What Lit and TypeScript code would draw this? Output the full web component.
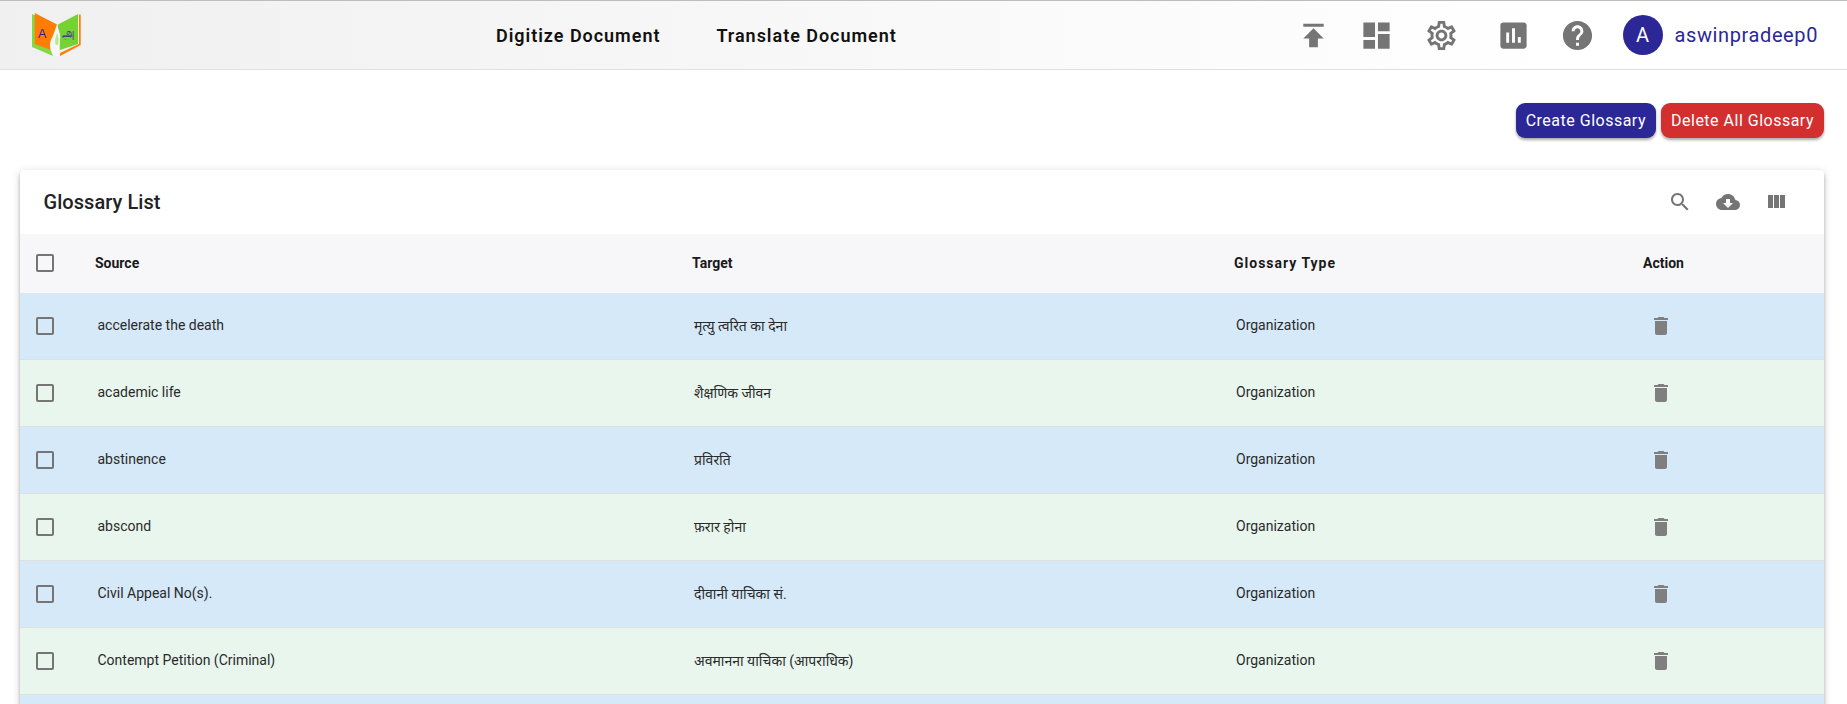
import { LitElement, css, html, svg } from "lit";
import { customElement } from "lit/decorators.js";

const rows = [
  ["accelerate the death", "मृत्यु त्वरित का देना"],
  ["academic life", "शैक्षणिक जीवन"],
  ["abstinence", "प्रविरति"],
  ["abscond", "फ़रार होना"],
  ["Civil Appeal No(s).", "दीवानी याचिका सं."],
  ["Contempt Petition (Criminal)", "अवमानना याचिका (आपराधिक)"],
];

// material icon paths, 24x24 viewbox
const icons: Record<string, string> = {
  publish: "M5 4v2h14V4H5zm0 10h4v6h6v-6h4l-7-7-7 7z",
  dashboard: "M3 13h8V3H3v10zm0 8h8v-6H3v6zm10 0h8V11h-8v10zm0-18v6h8V3h-8z",
  settings:
    "M19.43 12.98c.04-.32.07-.64.07-.98 0-.34-.03-.66-.07-.98l2.11-1.65c.19-.15.24-.42.12-.64l-2-3.46c-.09-.16-.26-.25-.44-.25-.06 0-.12.01-.17.03l-2.49 1c-.52-.4-1.08-.73-1.69-.98l-.38-2.65C14.46 2.18 14.25 2 14 2h-4c-.25 0-.46.18-.49.42l-.38 2.65c-.61.25-1.17.59-1.69.98l-2.49-1c-.06-.02-.12-.03-.18-.03-.17 0-.34.09-.43.25l-2 3.46c-.13.22-.07.49.12.64l2.11 1.65c-.04.32-.07.65-.07.98 0 .33.03.66.07.98l-2.11 1.65c-.19.15-.24.42-.12.64l2 3.46c.09.16.26.25.44.25.06 0 .12-.01.17-.03l2.49-1c.52.4 1.08.73 1.69.98l.38 2.65c.03.24.24.42.49.42h4c.25 0 .46-.18.49-.42l.38-2.65c.61-.25 1.17-.59 1.69-.98l2.49 1c.06.02.12.03.18.03.17 0 .34-.09.43-.25l2-3.46c.12-.22.07-.49-.12-.64l-2.11-1.65zm-1.98-1.71c.04.31.05.52.05.73 0 .21-.02.43-.05.73l-.14 1.13.89.7 1.08.84-.7 1.21-1.27-.51-1.04-.42-.9.68c-.43.32-.84.56-1.25.73l-1.06.43-.16 1.13-.2 1.35h-1.4l-.19-1.35-.16-1.13-1.06-.43c-.43-.18-.83-.41-1.23-.71l-.91-.7-1.06.43-1.27.51-.7-1.21 1.08-.84.89-.7-.14-1.13c-.03-.31-.05-.54-.05-.74s.02-.43.05-.73l.14-1.13-.89-.7-1.08-.84.7-1.21 1.27.51 1.04.42.9-.68c.43-.32.84-.56 1.25-.73l1.06-.43.16-1.13.2-1.35h1.39l.19 1.35.16 1.13 1.06.43c.43.18.83.41 1.23.71l.91.7 1.06-.43 1.27-.51.7 1.21-1.07.85-.89.7.14 1.13zM12 8c-2.21 0-4 1.79-4 4s1.79 4 4 4 4-1.79 4-4-1.79-4-4-4zm0 6c-1.1 0-2-.9-2-2s.9-2 2-2 2 .9 2 2-.9 2-2 2z",
  chart:
    "M19 3H5c-1.1 0-2 .9-2 2v14c0 1.1.9 2 2 2h14c1.1 0 2-.9 2-2V5c0-1.1-.9-2-2-2zM9 17H7v-7h2v7zm4 0h-2V7h2v10zm4 0h-2v-4h2v4z",
  help:
    "M12 2C6.48 2 2 6.48 2 12s4.48 10 10 10 10-4.48 10-10S17.52 2 12 2zm1 17h-2v-2h2v2zm2.07-7.75l-.9.92C13.45 12.9 13 13.5 13 15h-2v-.5c0-1.1.45-2.1 1.17-2.83l1.24-1.26c.37-.36.59-.86.59-1.41 0-1.1-.9-2-2-2s-2 .9-2 2H8c0-2.21 1.79-4 4-4s4 1.79 4 4c0 .88-.36 1.68-.93 2.25z",
  search:
    "M15.5 14h-.79l-.28-.27C15.41 12.59 16 11.11 16 9.5 16 5.91 13.09 3 9.5 3S3 5.91 3 9.5 5.91 16 9.5 16c1.61 0 3.09-.59 4.23-1.57l.27.28v.79l5 4.99L20.49 19l-4.99-5zm-6 0C7.01 14 5 11.99 5 9.5S7.01 5 9.5 5 14 7.01 14 9.5 11.99 14 9.5 14z",
  download:
    "M19.35 10.04C18.67 6.59 15.64 4 12 4 9.11 4 6.6 5.64 5.35 8.04 2.34 8.36 0 10.91 0 14c0 3.31 2.69 6 6 6h13c2.76 0 5-2.24 5-5 0-2.64-2.05-4.78-4.65-4.96zM17 13l-5 5-5-5h3V9h4v4h3z",
  columns: "M10 18h5V5h-5v13zm-6 0h5V5H4v13zM16 5v13h5V5h-5z",
  trash: "M6 19c0 1.1.9 2 2 2h8c1.1 0 2-.9 2-2V7H6v12zM19 4h-3.5l-1-1h-5l-1 1H5v2h14V4z",
  box: "M19 5v14H5V5h14m0-2H5c-1.1 0-2 .9-2 2v14c0 1.1.9 2 2 2h14c1.1 0 2-.9 2-2V5c0-1.1-.9-2-2-2z",
};

const icon = (name: string, cls = "") => html`
  <svg class="icon ${cls}" viewBox="0 0 24 24"><path d=${icons[name]}></path></svg>
`;

const logo = svg`
  <polygon points="0,1 21,12 21,43 0,34" fill="#84d843"></polygon>
  <polygon points="2.7,0 25,11.5 18,31 19,37 2.7,31" fill="#ff7d05"></polygon>
  <polygon points="48.7,1.5 48.7,32 28,43 28,40 47,31 47,1.5" fill="#ff7d05"></polygon>
  <polygon points="26,11.5 46,1 46,31 28,37 24,21" fill="#74d233"></polygon>
  <path d="M21 43 C18 36 17 32 19 27 C21 22 24 19 25 12 C27 18 29 22 28 28 C28 33 27 37 27 43 Z" fill="#f6f6f6"></path>
  <path d="M24 32 C22 28 24 24 25 20 C27 24 27 28 26 32 Z" fill="#b6ec90"></path>
  <text x="6" y="24.5" class="logo-a">A</text>
  <text x="29.5" y="26" class="logo-t" textLength="12.5" lengthAdjust="spacingAndGlyphs">அ</text>
`;

@customElement("app-root")
export class AppRoot extends LitElement {
  static styles = css`
    :host {
      display: block;
      height: 704px;
      overflow: hidden;
      background: #fff;
      font-family: Roboto, "Noto Sans", sans-serif;
      color: #222;
    }
    .icon {
      display: block;
      fill: #757575;
    }
    header {
      height: 68px;
      display: flex;
      align-items: center;
      border-top: 1px solid #bdbdbd;
      border-bottom: 1px solid #e0e0e0;
      background: linear-gradient(90deg, #f0f0f0, #ffffff 85%);
    }
    .logo {
      width: 49px;
      height: 43px;
      margin-left: 32px;
      align-self: flex-start;
      margin-top: 12px;
      flex: none;
    }
    .logo-a {
      font: 12.5px "Liberation Sans", sans-serif;
      fill: #3a1a9a;
    }
    .logo-t {
      font: 17px "Noto Sans", sans-serif;
      fill: #3a1a9a;
    }
    nav {
      display: flex;
      gap: 56px;
      margin-left: 415px;
      font-size: 18px;
      font-weight: 600;
      letter-spacing: 0.97px;
      color: #111;
    }
    .tools {
      margin-left: auto;
      display: flex;
      align-items: center;
      padding-right: 29px;
    }
    .tools .icon {
      width: 35px;
      height: 35px;
    }
    .tools .t1 { margin-right: 28px; }
    .tools .t2 { margin-right: 30px; }
    .tools .t3 { margin-right: 37px; }
    .tools .t4 { margin-right: 29px; }
    .tools .t5 { margin-right: 28px; }
    .avatar {
      width: 40px;
      height: 40px;
      border-radius: 50%;
      background: #2b2797;
      color: #fff;
      font-size: 20px;
      display: flex;
      align-items: center;
      justify-content: center;
      margin-right: 12px;
    }
    .user {
      font-size: 20px;
      color: #2b2797;
      letter-spacing: 0.6px;
    }
    .actions {
      display: flex;
      justify-content: flex-end;
      gap: 5px;
      padding: 33px 23px 0 0;
    }
    button {
      height: 35px;
      border: 0;
      border-radius: 9px;
      padding: 0 10px;
      font: 450 16px Roboto, sans-serif;
      letter-spacing: 0.5px;
      color: #fff;
      box-shadow: 0 2px 3px rgba(0, 0, 0, 0.35);
    }
    .create { background: #2b2797; }
    .remove { background: #d32f2f; }
    .card {
      margin: 32px 23px 0 20px;
      border-radius: 4px;
      background: #fff;
      box-shadow: 0 2px 4px -1px rgba(0, 0, 0, 0.2), 0 4px 5px rgba(0, 0, 0, 0.14), 0 1px 10px rgba(0, 0, 0, 0.12);
    }
    .title {
      height: 64px;
      display: flex;
      align-items: center;
      padding: 0 36px 0 24px;
    }
    h2 {
      margin: 0;
      font-size: 20px;
      font-weight: 500;
      letter-spacing: 0.05px;
      color: #222;
      flex: 1;
      margin-left: -0.5px;
    }
    .title .icon {
      width: 24px;
      height: 24px;
    }
    .title .search { margin-right: 24px; }
    .title .download { margin-right: 24px; }
    .row {
      display: grid;
      grid-template-columns: 75px 597px 542px 409px 1fr;
      align-items: center;
      height: 66px;
      border-bottom: 1px solid #e0e0e0;
      font-size: 14px;
      color: #2a2a2a;
    }
    .row.head {
      height: 59px;
      border-bottom: 0;
      font-weight: 700;
      color: #1a1a1a;
    }
    .row > span { padding: 0 0 2px 2px; }
    .row > .src { padding-left: 2.5px; }
    .row.head > span { padding: 0 0 2px; }
    .row .gt { letter-spacing: 1px; }
    .row:nth-child(even) { background: #d6e9f8; }
    .row:nth-child(odd) { background: #e9f6ee; }
    .row.head:nth-child(odd), .row.head:nth-child(even) { background: #f7f7f9; }
    .box {
      width: 24px;
      height: 24px;
      margin-left: 13px;
    }
    .row.head .box { margin-bottom: 1px; }
    .trash {
      width: 24px;
      height: 24px;
      margin-left: 6px;
      fill: #7f7f7f;
    }
  `;

  render() {
    return html`
      <header>
        <svg class="logo" viewBox="0 0 49 43">${logo}</svg>
        <nav><span>Digitize Document</span><span>Translate Document</span></nav>
        <div class="tools">
          ${icon("publish", "t1")} ${icon("dashboard", "t2")} ${icon("settings", "t3")}
          ${icon("chart", "t4")} ${icon("help", "t5")}
          <div class="avatar">A</div>
          <span class="user">aswinpradeep0</span>
        </div>
      </header>
      <div class="actions">
        <button class="create">Create Glossary</button>
        <button class="remove">Delete All Glossary</button>
      </div>
      <section class="card">
        <div class="title">
          <h2>Glossary List</h2>
          ${icon("search", "search")} ${icon("download", "download")} ${icon("columns")}
        </div>
        <div class="table">
          <div class="row head">
            ${icon("box", "box")}
            <span>Source</span><span>Target</span><span class="gt">Glossary Type</span>
            <span>Action</span>
          </div>
          ${rows.map(
            ([source, target]) => html`
              <div class="row">
                ${icon("box", "box")}
                <span class="src">${source}</span><span>${target}</span><span>Organization</span>
                ${icon("trash", "trash")}
              </div>
            `
          )}
          <div class="row"></div>
        </div>
      </section>
    `;
  }
}
